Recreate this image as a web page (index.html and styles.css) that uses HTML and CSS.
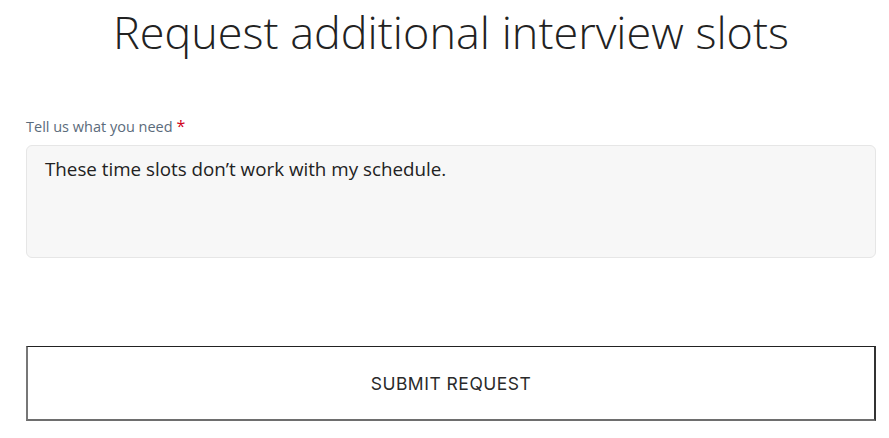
FILE: index.html
```html
<!DOCTYPE html>
<html>
<head>
<meta charset="utf-8">
<link rel="stylesheet" href="styles.css">
</head>
<body>
<main class="page">
  <h1 class="title">Request additional interview slots</h1>
  <form class="form">
    <label class="label">Tell us what you need <span class="req">*</span></label>
    <div class="textarea">These time slots don’t work with my schedule.</div>
    <button type="button" class="submit">SUBMIT REQUEST</button>
  </form>
</main>
</body>
</html>
```

FILE: styles.css
```css
html, body {
  margin: 0;
  padding: 0;
  background: #ffffff;
}
.page {
  width: 850px;
  margin-left: 26px;
  font-family: "Open Sans", sans-serif;
}
.title {
  margin: 0;
  padding-top: 2px;
  font-family: "Open Sans", sans-serif;
  font-weight: 300;
  font-size: 45px;
  line-height: 60px;
  text-align: center;
  color: #222222;
}
.form {
  display: flex;
  flex-direction: column;
  padding-top: 55px;
}
.label {
  font-size: 14.5px;
  line-height: 19px;
  color: #5b6b7b;
  margin-bottom: 9px;
}
.req {
  color: #d0021b;
  font-size: 16px;
}
.textarea {
  box-sizing: border-box;
  height: 113px;
  background: #f7f7f7;
  border: 1px solid #e6e6e6;
  border-radius: 6px;
  padding: 10px 18px;
  font-size: 18.8px;
  line-height: 26px;
  color: #222222;
}
.submit {
  box-sizing: border-box;
  margin-top: 88px;
  height: 75px;
  width: 850px;
  background: #ffffff;
  border-top: 1px solid #222222;
  border-right: 2px solid #333333;
  border-bottom: 2px solid #6e6e6e;
  border-left: 2px solid #777777;
  font-family: "Inter", "DejaVu Sans", sans-serif;
  font-size: 17.5px;
  font-weight: 400;
  letter-spacing: 0.5px;
  color: #2a2a2a;
  padding: 0;
}
```
